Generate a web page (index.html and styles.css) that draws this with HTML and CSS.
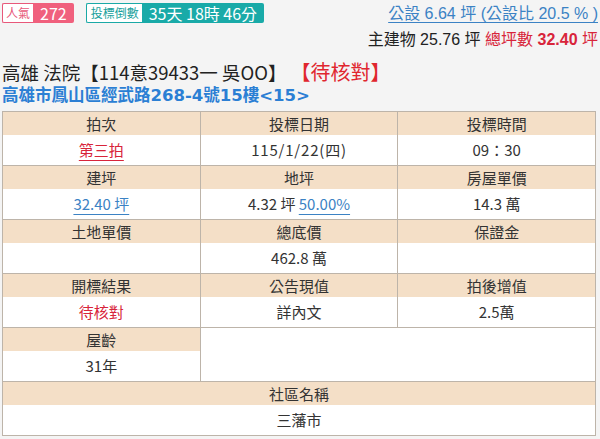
FILE: index.html
```html
<!DOCTYPE html>
<html lang="zh-Hant">
<head>
<meta charset="utf-8">
<link rel="stylesheet" href="styles.css">
</head>
<body>
<div class="page">
  <header class="top">
    <div class="badges">
      <span class="badge pink"><span class="lbl">人氣</span><span class="val">272</span></span>
      <span class="badge teal"><span class="lbl">投標倒數</span><span class="val">35天 18時 46分</span></span>
    </div>
    <div class="areas">
      <a class="pub" href="#">公設 6.64 坪 (公設比 20.5 % )</a>
      <div class="main">主建物 25.76 坪 <span class="red">總坪數 <b>32.40</b> 坪</span></div>
    </div>
  </header>
  <h1 class="title">高雄 法院【114意39433一 吳OO】<span class="status">【待核對】</span></h1>
  <div class="addr">高雄市鳳山區經武路268-4號15樓&lt;15&gt;</div>
  <table class="info">
    <tr>
      <td><div class="h">拍次</div><div class="v"><a class="lk red" href="#">第三拍</a></div></td>
      <td><div class="h">投標日期</div><div class="v wide">115/1/22(四)</div></td>
      <td><div class="h">投標時間</div><div class="v">09：30</div></td>
    </tr>
    <tr>
      <td><div class="h">建坪</div><div class="v"><a class="lk blue" href="#">32.40 坪</a></div></td>
      <td><div class="h">地坪</div><div class="v">4.32 坪 <a class="lk blue" href="#">50.00%</a></div></td>
      <td><div class="h">房屋單價</div><div class="v">14.3 萬</div></td>
    </tr>
    <tr>
      <td><div class="h">土地單價</div><div class="v"></div></td>
      <td><div class="h">總底價</div><div class="v">462.8 萬</div></td>
      <td><div class="h">保證金</div><div class="v"></div></td>
    </tr>
    <tr>
      <td><div class="h">開標結果</div><div class="v"><span class="red">待核對</span></div></td>
      <td><div class="h">公告現值</div><div class="v">詳內文</div></td>
      <td><div class="h">拍後增值</div><div class="v">2.5萬</div></td>
    </tr>
    <tr>
      <td><div class="h">屋齡</div><div class="v">31年</div></td>
      <td colspan="2" class="empty"></td>
    </tr>
    <tr>
      <td colspan="3"><div class="h">社區名稱</div><div class="v">三藩市</div></td>
    </tr>
  </table>
</div>
</body>
</html>
```
FILE: styles.css
```css
html, body {
  margin: 0;
  padding: 0;
  background: #f4f4f4;
}
body {
  font-family: "Noto Sans CJK TC", "Noto Sans", sans-serif;
  color: #222;
}
.page {
  padding: 3px 2px 0 2px;
}
.top {
  display: flex;
  justify-content: space-between;
  align-items: flex-start;
  height: 57px;
}
.badges {
  display: flex;
  gap: 12px;
}
.badge {
  display: flex;
  height: 20px;
}
.badge .lbl {
  box-sizing: border-box;
  height: 20px;
  background: #fff;
  padding: 0 3px;
  border: 1px solid;
  border-right: none;
  border-radius: 2px 0 0 2px;
  font-size: 12px;
  line-height: 18px;
}
.badge .val {
  height: 20px;
  color: #fff;
  font-size: 16px;
  line-height: 20px;
  border-radius: 0 2px 2px 0;
}
.pink .lbl { color: #e8587a; border-color: #e8587a; }
.pink .val { background: #f0607d; padding: 0 7px; }
.teal .lbl { color: #179f9c; border-color: #1aa9a6; padding: 0 3px 0 4px; }
.teal .val { background: #19aaa8; padding: 0 7px; }
.areas {
  display: flex;
  flex-direction: column;
  align-items: flex-end;
  font-family: "Liberation Sans", "Noto Sans CJK TC", sans-serif;
  font-size: 16px;
  line-height: 22px;
}
.pub {
  color: #3b82c4;
  text-decoration: underline;
  text-underline-offset: 3px;
  margin-bottom: 4px;
}
.main { color: #222; }
.red { color: #d8243a; }
.main b { font-weight: bold; }
.title {
  margin: 0;
  font-size: 18.5px;
  font-weight: normal;
  line-height: 24px;
  color: #222;
}
.status {
  color: #e0262e;
  font-size: 20px;
  margin-left: 14px;
}
.addr {
  font-family: "DejaVu Sans", "Noto Sans CJK TC", sans-serif;
  font-size: 16.5px;
  font-weight: bold;
  color: #2b7fd4;
  line-height: 22px;
  margin-top: 1px;
}
.info {
  width: 594px;
  margin-top: 4px;
  border-collapse: collapse;
  table-layout: fixed;
  background: #fff;
  font-size: 15px;
  color: #333;
  text-align: center;
}
.info td {
  border: 1px solid #bdb4a9;
  padding: 0;
  vertical-align: top;
}
.info .h {
  background: #f4dfc7;
  height: 23px;
  line-height: 23px;
}
.info .v {
  height: 30px;
  line-height: 30px;
}
.info .v.wide {
  letter-spacing: 0.8px;
}
.info td.empty {
  background: #fff;
}
.lk {
  text-decoration: underline;
  text-underline-offset: 4px;
}
.lk.red { color: #d8243a; }
.lk.blue { color: #3b82c4; }
```
